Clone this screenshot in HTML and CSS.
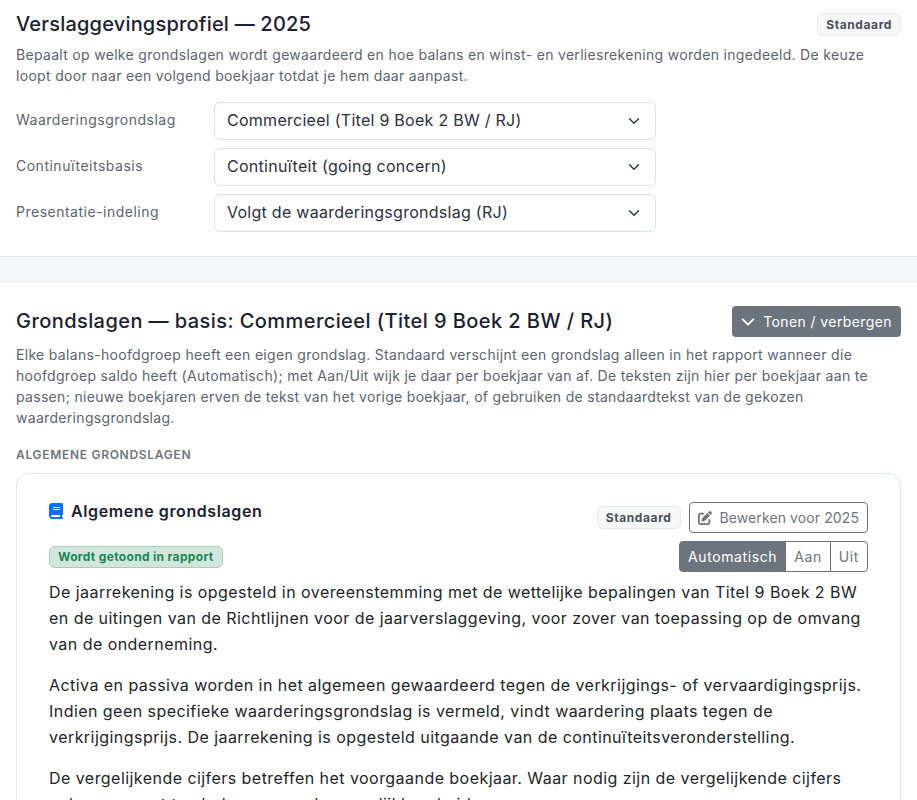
FILE: index.html
```html
<!DOCTYPE html>
<html lang="nl">
<head>
    <meta charset="UTF-8">
    <meta name="viewport" content="width=device-width, initial-scale=1.0">
    <title>Verslaggevingsprofiel</title>
    <link rel="stylesheet" href="styles.css">
</head>
<body>
    <section class="panel profile">
        <div class="panel-head">
            <h2 class="title">Verslaggevingsprofiel — 2025</h2>
            <span class="tag">Standaard</span>
        </div>
        <p class="help">Bepaalt op welke grondslagen wordt gewaardeerd en hoe balans en winst- en verliesrekening worden ingedeeld. De keuze loopt door naar een volgend boekjaar totdat je hem daar aanpast.</p>
        <div class="form-row">
            <label class="form-label">Waarderingsgrondslag</label>
            <div class="select"><span>Commercieel (Titel 9 Boek 2 BW / RJ)</span>
                <svg class="caret" viewBox="0 0 16 16"><path d="M2 5l6 6 6-6"/></svg>
            </div>
        </div>
        <div class="form-row">
            <label class="form-label">Continuïteitsbasis</label>
            <div class="select"><span>Continuïteit (going concern)</span>
                <svg class="caret" viewBox="0 0 16 16"><path d="M2 5l6 6 6-6"/></svg>
            </div>
        </div>
        <div class="form-row">
            <label class="form-label">Presentatie-indeling</label>
            <div class="select"><span>Volgt de waarderingsgrondslag (RJ)</span>
                <svg class="caret" viewBox="0 0 16 16"><path d="M2 5l6 6 6-6"/></svg>
            </div>
        </div>
    </section>

    <section class="panel policies">
        <div class="panel-head">
            <h2 class="title">Grondslagen — basis: Commercieel (Titel 9 Boek 2 BW / RJ)</h2>
            <button class="btn-dark">
                <svg class="btn-caret" viewBox="0 0 16 16"><path d="M2 5l6 6 6-6"/></svg>
                Tonen / verbergen
            </button>
        </div>
        <p class="help">Elke balans-hoofdgroep heeft een eigen grondslag. Standaard verschijnt een grondslag alleen in het rapport wanneer die hoofdgroep saldo heeft (Automatisch); met Aan/Uit wijk je daar per boekjaar van af. De teksten zijn hier per boekjaar aan te passen; nieuwe boekjaren erven de tekst van het vorige boekjaar, of gebruiken de standaardtekst van de gekozen waarderingsgrondslag.</p>
        <div class="group-label">ALGEMENE GRONDSLAGEN</div>

        <article class="card">
            <div class="card-top">
                <h3 class="card-title">
                    <svg class="book" viewBox="0 0 448 512"><path d="M96 0C43 0 0 43 0 96v320c0 53 43 96 96 96h320a32 32 0 0 0 0-64v-64a32 32 0 0 0 32-32V32a32 32 0 0 0-32-32H96zm0 384h256v64H96a32 32 0 0 1 0-64zm32-240a16 16 0 0 1 16-16h192a16 16 0 0 1 0 32H144a16 16 0 0 1-16-16zm16 48h192a16 16 0 0 1 0 32H144a16 16 0 0 1 0-32z"/></svg>
                    Algemene grondslagen
                </h3>
                <div class="card-actions">
                    <span class="tag">Standaard</span>
                    <button class="btn-outline">
                        <svg class="edit" viewBox="0 0 512 512"><path d="M471.6 21.7c-21.9-21.9-57.3-21.9-79.2 0L362.3 51.7l97.9 97.9 30.1-30.1c21.9-21.9 21.9-57.3 0-79.2L471.6 21.7zM172.4 241.7c-6.1 6.1-10.8 13.6-13.5 21.9l-29.6 88.8c-2.9 8.6-.6 18.1 5.8 24.6s15.9 8.7 24.6 5.8l88.8-29.6c8.2-2.7 15.7-7.4 21.9-13.5L437.7 172.3 339.7 74.3 172.4 241.7zM96 64C43 64 0 107 0 160V416c0 53 43 96 96 96H352c53 0 96-43 96-96V320c0-17.7-14.3-32-32-32s-32 14.3-32 32v96c0 17.7-14.3 32-32 32H96c-17.7 0-32-14.3-32-32V160c0-17.7 14.3-32 32-32h96c17.7 0 32-14.3 32-32s-14.3-32-32-32H96z"/></svg>
                        Bewerken voor 2025
                    </button>
                </div>
            </div>
            <div class="card-status">
                <span class="shown">Wordt getoond in rapport</span>
                <div class="btn-group">
                    <button class="active">Automatisch</button>
                    <button>Aan</button>
                    <button>Uit</button>
                </div>
            </div>
            <div class="card-text">
                <p>De jaarrekening is opgesteld in overeenstemming met de wettelijke bepalingen van Titel 9 Boek 2 BW en de uitingen van de Richtlijnen voor de jaarverslaggeving, voor zover van toepassing op de omvang van de onderneming.</p>
                <p>Activa en passiva worden in het algemeen gewaardeerd tegen de verkrijgings- of vervaardigingsprijs. Indien geen specifieke waarderingsgrondslag is vermeld, vindt waardering plaats tegen de verkrijgingsprijs. De jaarrekening is opgesteld uitgaande van de continuïteitsveronderstelling.</p>
                <p>De vergelijkende cijfers betreffen het voorgaande boekjaar. Waar nodig zijn de vergelijkende cijfers ook aangepast ten behoeve van de vergelijkbaarheid.</p>
            </div>
        </article>
    </section>
</body>
</html>
```

FILE: styles.css
```css
* {
    margin: 0;
    padding: 0;
    box-sizing: border-box;
}

html, body {
    height: 800px;
    overflow: hidden;
}

body {
    font-family: 'Inter', 'Open Sans', sans-serif;
    background: #f5f7fa;
    color: #1f2937;
}

.panel {
    background: #fff;
    padding: 9px 16px 24px;
}

.profile {
    height: 257px;
    border-bottom: 1px solid #e3e7ee;
}

.policies {
    margin-top: 24px;
    border-top: 1px solid #e3e7ee;
    padding-top: 24px;
}

.panel-head {
    display: flex;
    justify-content: space-between;
    align-items: center;
}

.title {
    font-size: 20px;
    line-height: 30px;
    font-weight: 500;
    letter-spacing: 0.2px;
    color: #1b2130;
}

.policies .title {
    line-height: 29px;
    padding-bottom: 1px;
    letter-spacing: 0.43px;
}

.tag {
    display: inline-block;
    font-size: 12px;
    line-height: 21px;
    font-weight: 700;
    letter-spacing: 0.6px;
    color: #495057;
    background: #f6f7f9;
    border: 1px solid #e3e7ee;
    border-radius: 6px;
    padding: 0 8px;
}

.help {
    font-size: 14px;
    line-height: 21px;
    letter-spacing: 0.31px;
    color: #5c6470;
    margin-top: 5px;
}

.help + .form-row {
    margin-top: 16px;
}

.form-row {
    display: flex;
    align-items: center;
    margin-bottom: 8px;
}

.form-label {
    width: 198px;
    padding-bottom: 3px;
    font-size: 14px;
    letter-spacing: 0.5px;
    color: #5c6470;
}

.select {
    width: 442px;
    height: 38px;
    display: flex;
    align-items: center;
    justify-content: space-between;
    border: 1px solid #dee2e6;
    border-radius: 6px;
    padding: 0 15px 2px 12px;
    font-size: 16px;
    letter-spacing: 0.27px;
    color: #2a3142;
    background: #fff;
}

.caret {
    width: 12px;
    height: 12px;
    margin-top: 2px;
    fill: none;
    stroke: #343a40;
    stroke-width: 2;
    stroke-linecap: round;
    stroke-linejoin: round;
}

.btn-dark {
    display: flex;
    align-items: center;
    gap: 8px;
    height: 31px;
    padding: 0 9px;
    border: none;
    border-radius: 4px;
    background: #6c757d;
    color: #fff;
    font: 400 14px 'Inter', sans-serif;
    letter-spacing: 0.4px;
}

.btn-caret {
    width: 14px;
    height: 14px;
    fill: none;
    stroke: #fff;
    stroke-width: 2.2;
    stroke-linecap: round;
    stroke-linejoin: round;
}

.policies .help {
    margin-top: 7px;
}

.group-label {
    margin-top: 18px;
    font-size: 12px;
    line-height: 18px;
    font-weight: 600;
    letter-spacing: 0.7px;
    color: #6c757d;
}

.card {
    margin-top: 9px;
    border: 1px solid #e3e7ee;
    border-radius: 12px;
    padding: 28px 32px;
}

.card-top {
    display: flex;
    justify-content: space-between;
    align-items: flex-start;
}

.card-title {
    display: flex;
    align-items: center;
    gap: 8px;
    font-size: 16px;
    line-height: 18px;
    font-weight: 600;
    letter-spacing: 0.6px;
    color: #1b2130;
}

.book {
    width: 14px;
    height: 16px;
    fill: #0d6efd;
}

.card-actions {
    display: flex;
    align-items: center;
    gap: 8px;
}

.btn-outline {
    display: flex;
    align-items: center;
    gap: 8px;
    height: 31px;
    padding: 0 8px;
    background: #fff;
    border: 1px solid #6c757d;
    border-radius: 4px;
    color: #6c757d;
    font: 400 14px 'Inter', sans-serif;
    letter-spacing: 0.1px;
}

.edit {
    width: 14px;
    height: 14px;
    fill: #6c757d;
}

.card-status {
    display: flex;
    justify-content: space-between;
    align-items: center;
    margin-top: 8px;
}

.shown {
    font-size: 12px;
    line-height: 20px;
    font-weight: 700;
    letter-spacing: 0.33px;
    color: #198754;
    background: #d1e7dd;
    border: 1px solid #a3cfbb;
    border-radius: 6px;
    padding: 0 8px;
}

.btn-group {
    display: flex;
}

.btn-group button {
    height: 31px;
    padding: 0 8px;
    background: #fff;
    border: 1px solid #6c757d;
    margin-left: -1px;
    color: #6c757d;
    font: 400 14px 'Inter', sans-serif;
    letter-spacing: 0.6px;
}

.btn-group button:first-child {
    border-radius: 4px 0 0 4px;
}

.btn-group button:last-child {
    border-radius: 0 4px 4px 0;
}

.btn-group .active {
    background: #6c757d;
    color: #fff;
}

.card-text {
    margin-top: 7px;
    font-size: 16px;
    line-height: 26px;
    letter-spacing: 0.45px;
    color: #212529;
}

.card-text p {
    margin-bottom: 15px;
}
```
